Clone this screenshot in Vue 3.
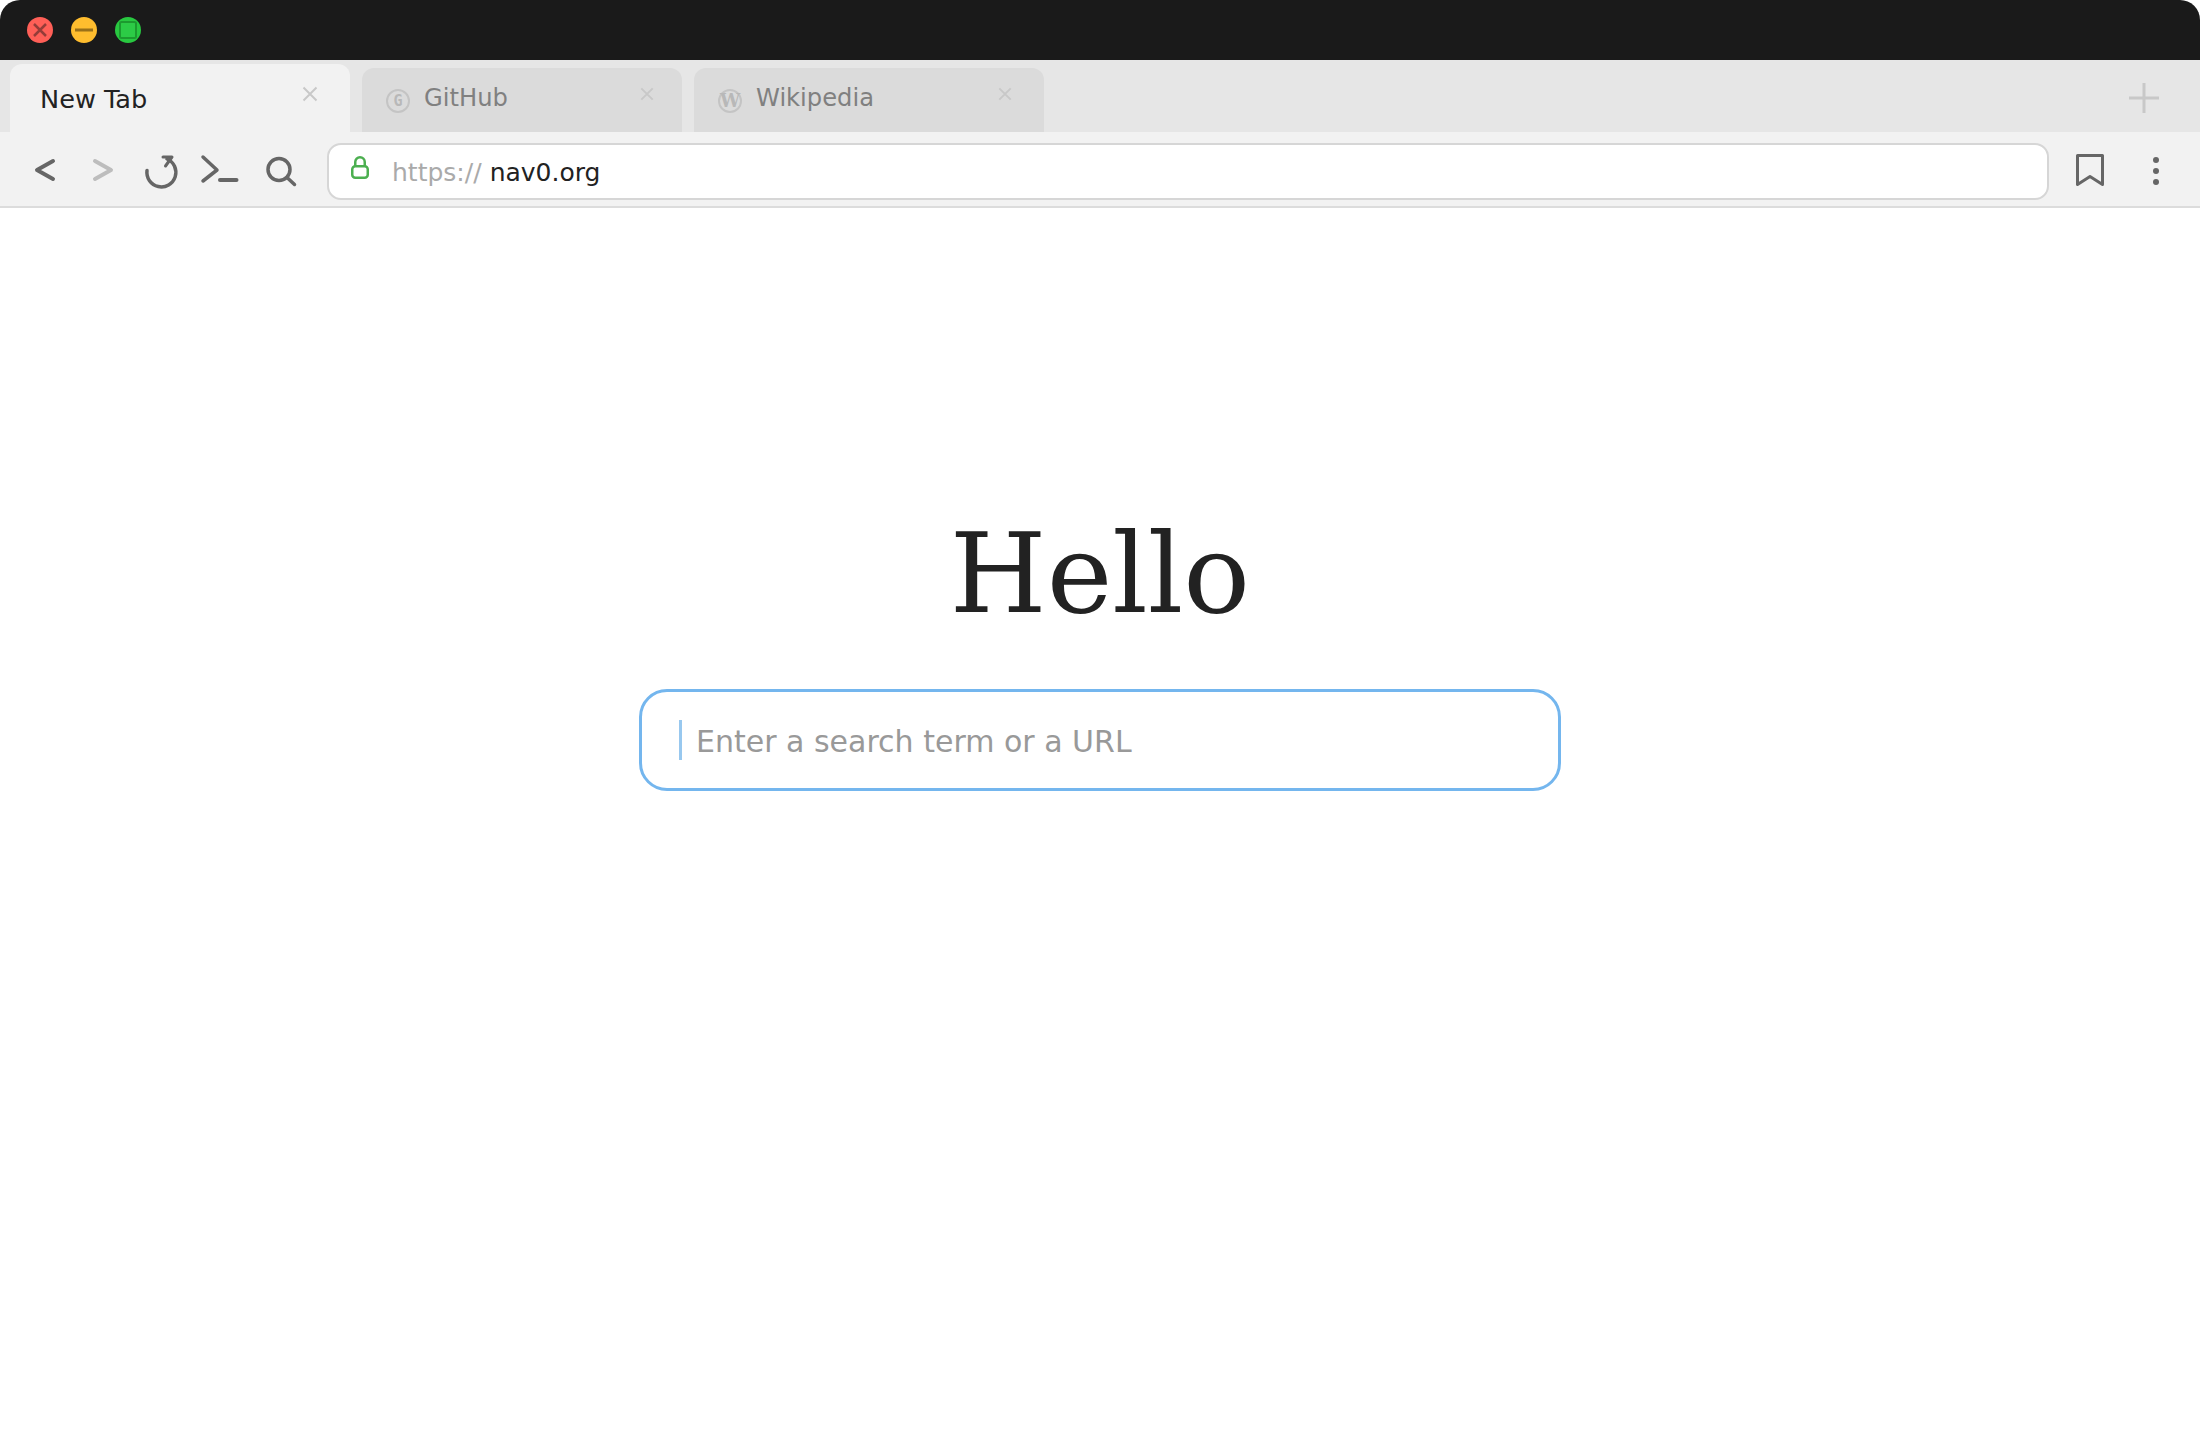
<script setup>
const tabs = [
  { title: 'GitHub', letter: 'G', w: 320, cls: 'gh' },
  { title: 'Wikipedia', letter: 'W', w: 350, cls: 'wp' },
]
</script>

<template>
  <div class="window">
    <header class="titlebar">
      <svg class="light" viewBox="0 0 26 26"><circle cx="13" cy="13" r="13" fill="#ff5f57"/><path d="M7 7l12 12M19 7L7 19" stroke="#963c38" stroke-width="2.500" fill="none"/></svg>
      <svg class="light" viewBox="0 0 26 26"><circle cx="13" cy="13" r="13" fill="#ffbd2e"/><path d="M4 13h18" stroke="#9a7018" stroke-width="2.800" fill="none"/></svg>
      <svg class="light" viewBox="0 0 26 26"><circle cx="13" cy="13" r="13" fill="#28c840"/><rect x="5" y="5" width="16" height="16" rx="1.500" fill="#2ccb46" stroke="#1c9a2f" stroke-width="2"/></svg>
    </header>

    <div class="tabstrip">
      <div class="tab active">
        <span class="tab-title">New Tab</span>
        <svg class="tab-x" viewBox="0 0 16 16"><path d="M1.500 1.500l13 13M14.500 1.500l-13 13" stroke="#c8c8c8" stroke-width="2" fill="none"/></svg>
      </div>
      <div v-for="t in tabs" :key="t.title" class="tab" :class="t.cls" :style="{ width: t.w + 'px' }">
        <span class="favicon"><span class="fav-letter">{{ t.letter }}</span></span>
        <span class="tab-title">{{ t.title }}</span>
        <svg class="tab-x" viewBox="0 0 16 16"><path d="M1.500 1.500l13 13M14.500 1.500l-13 13" stroke="#c8c8c8" stroke-width="2.200" fill="none"/></svg>
      </div>
      <svg class="newtab" viewBox="0 0 32 32"><path d="M16 1v30M1 16h30" stroke="#c8c8c8" stroke-width="3" fill="none"/></svg>
    </div>

    <div class="toolbar">
      <svg class="tb-icons" width="327" height="74" viewBox="0 132 327 74" fill="none" stroke="#666" stroke-width="3.500" stroke-linecap="round" stroke-linejoin="round">
        <path d="M53 161 37 170 53 179" stroke-width="4"/>
        <path d="M95 161 111 170 95 179" stroke="#bdbdbd" stroke-width="4"/>
        <path d="M147 170.500a14.500 14.500 0 1 0 20-11.500"/>
        <path d="M163 157h9l-6.500 9" stroke-width="3"/>
        <path d="M203 157 217 170 203 181"/>
        <path d="M220 180h16.500" stroke-width="4"/>
        <circle cx="279" cy="169.500" r="11"/>
        <path d="M287 177.500l7.500 7"/>
      </svg>

      <div class="addr">
        <svg class="lock" viewBox="0 0 18 23" fill="none" stroke="#4caf50" stroke-width="2.500"><rect x="1.250" y="10.250" width="15.500" height="11.500" rx="3"/><path d="M4.250 10V6a4.750 4.750 0 0 1 9.500 0v4"/></svg>
        <span class="scheme">https://</span><span class="host">nav0.org</span>
      </div>

      <svg class="bookmark" viewBox="0 0 28 32" fill="none" stroke="#666" stroke-width="3" stroke-linejoin="round"><path d="M1.500 1.500h25v29l-12.500-8-12.500 8z"/></svg>
      <svg class="kebab" viewBox="0 0 6 28" fill="#666"><circle cx="3" cy="3" r="3"/><circle cx="3" cy="14" r="3"/><circle cx="3" cy="25" r="3"/></svg>
    </div>

    <main class="page">
      <h1 class="hello">Hello</h1>
      <div class="search">
        <span class="caret"></span>
        <span class="placeholder">Enter a search term or a URL</span>
      </div>
    </main>
  </div>
</template>

<style scoped>
.window {
  width: 2200px;
  height: 1440px;
  background: #fff;
  display: flex;
  flex-direction: column;
  font-family: "DejaVu Sans", sans-serif;
  overflow: hidden;
  border-radius: 20px 20px 0 0;
}
.titlebar {
  height: 60px;
  background: #1a1a1a;
  display: flex;
  align-items: center;
  gap: 18px;
  padding-left: 27px;
  box-sizing: border-box;
}
.light { width: 26px; height: 26px; }
.tabstrip {
  height: 72px;
  background: #e6e6e6;
  display: flex;
  align-items: flex-end;
  gap: 12px;
  padding-left: 10px;
  box-sizing: border-box;
  position: relative;
}
.tab {
  height: 64px;
  background: #dbdbdb;
  border-radius: 12px 12px 0 0;
  display: flex;
  align-items: center;
  padding: 0 24px;
  box-sizing: border-box;
  color: #808080;
  font-size: 24.200px;
  position: relative;
}
.tab.active {
  width: 340px;
  height: 68px;
  background: #f2f2f2;
  color: #222;
  padding-left: 30px;
  font-size: 25.600px;
}
.active .tab-title { position: relative; top: 1px; }
.tab-title { line-height: 30px; position: relative; top: -2px; }
.tab-x {
  position: absolute;
  width: 16px;
  height: 16px;
  top: 22px;
  right: 32px;
}
.gh .tab-x { width: 14px; height: 14px; top: 19px; right: 28px; }
.wp .tab-x { width: 14px; height: 14px; top: 19px; right: 32px; }
.favicon {
  width: 24px;
  height: 24px;
  border: 2px solid #c4c4c4;
  border-radius: 50%;
  box-sizing: border-box;
  display: flex;
  align-items: center;
  justify-content: center;
  margin-right: 14px;
  position: relative;
  top: 1px;
}
.fav-letter { color: #b8b8b8; font-weight: 700; line-height: 1; }
.gh .fav-letter { font-family: "DejaVu Sans Mono", monospace; font-size: 15px; }
.wp .fav-letter { font-family: "DejaVu Serif", serif; font-size: 18px; }
.newtab {
  position: absolute;
  width: 32px;
  height: 32px;
  left: 2128px;
  top: 22px;
}
.toolbar {
  height: 76px;
  background: #f2f2f2;
  border-bottom: 2px solid #dcdcdc;
  box-sizing: border-box;
  display: flex;
  align-items: flex-start;
}
.tb-icons { flex: none; }
.addr {
  width: 1722px;
  height: 57px;
  margin-top: 11px;
  background: #fff;
  border: 2px solid #d6d6d6;
  border-radius: 14px;
  box-sizing: border-box;
  display: flex;
  align-items: center;
  font-size: 25px;
  padding-left: 22px;
  flex: none;
}
.lock { width: 18px; height: 23px; margin-right: 23px; position: relative; top: -4px; flex: none; }
.scheme { color: #aaa; margin-right: 8px; position: relative; top: 1px; }
.host { color: #222; position: relative; top: 1px; }
.bookmark { width: 28px; height: 32px; margin-left: 27px; margin-top: 22px; flex: none; }
.kebab { width: 6px; height: 28px; margin-left: 49px; margin-top: 25px; flex: none; }
.page {
  flex: 1;
  display: flex;
  flex-direction: column;
  align-items: center;
  padding-top: 294px;
}
.hello {
  margin: 0;
  font-family: "DejaVu Serif", serif;
  font-weight: 400;
  font-size: 111px;
  line-height: 144px;
  color: #222;
}
.search {
  width: 922px;
  height: 102px;
  margin-top: 43px;
  border: 3px solid #74b6ee;
  border-radius: 28px;
  box-sizing: border-box;
  display: flex;
  align-items: center;
  padding-left: 37px;
}
.caret {
  width: 3px;
  height: 40px;
  background: #98c8ef;
  margin-right: 14px;
}
.placeholder { font-size: 30px; color: #999; position: relative; top: 1px; }
</style>
